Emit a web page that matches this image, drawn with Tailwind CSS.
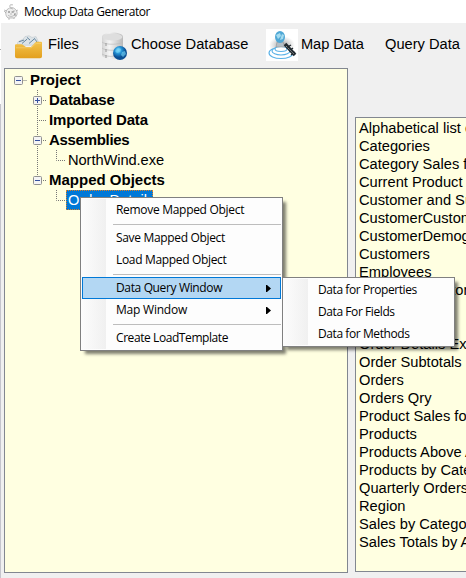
<!DOCTYPE html>
<html lang="en">
<head>
<meta charset="utf-8">
<title>Mockup Data Generator</title>
<script src="https://cdn.jsdelivr.net/npm/@tailwindcss/browser@4"></script>
</head>
<body class="w-[466px] h-[578px] overflow-hidden bg-white text-black font-['Liberation_Sans',sans-serif] text-[14.67px]">
<div class="relative w-[466px] h-[578px] overflow-hidden flex flex-col whitespace-nowrap">
  <header class="h-[23px] shrink-0 flex items-center pl-[3px] gap-[5px] bg-white">
    <svg class="w-4 h-[18px]" viewBox="0 0 16 18" fill="none" stroke="#999" stroke-width=".6">
      <path d="M7 4C6 2 8 1 10 2M5 6C2 7 2 13 5 15h6c4-2 4-7 1-9-2-2-5-2-7 0Z" fill="#eee"/>
      <path d="M4 8 1 7M1 8l2 2M13 8l2-1M6 8v2M9 8v2M11 7v2M5 12c2 2 5 2 7-1M7 11h2M6 15v2M11 15v1M7 5l3 1"/>
      <path d="M5 9h2M9 9h2M12 10v3" stroke="#555"/>
    </svg>
    <span class="font-['Open_Sans','Noto_Sans',sans-serif] text-[12px] leading-4 tracking-[-0.42px]">Mockup Data Generator</span>
  </header>
  <div class="flex-1 flex">
    <div class="w-px shrink-0 flex flex-col bg-white"><div class="h-[26px]"></div><div class="h-px bg-[#aaa]"></div><div class="h-[54px]"></div><div class="flex-1 bg-[#c5c5cc]"></div></div>
    <main class="flex-1 min-w-0 bg-[#f0f0f0] flex flex-col">
      <nav class="h-[42px] mb-[3px] shrink-0 flex items-center leading-[18px] text-[14.67px]">
        <svg class="ml-[13px] w-[29px] h-[25px] mt-[5px] shrink-0" viewBox="0 0 29 29" preserveAspectRatio="none">
          <defs><linearGradient id="fold" x2="0" y2="1"><stop stop-color="#f3c34c"/><stop offset="1" stop-color="#e3a01f"/></linearGradient></defs>
          <path d="m3 13 1-4 5-3 2-3 4-1 3 2 4-1 4 10Z" fill="#dce3e7" stroke="#b5bec5" stroke-width=".5"/>
          <path d="m5 9 5-2M8 11l5-5M13 4l3 3M15 11l6-6M21 6l3 5" stroke="#5c7f99" fill="none"/>
          <path d="M1 13q0-1 1-1h6l4 3h5l5-6h5q1 0 1 1v16q0 2-2 2H3q-2 0-2-2Z" fill="url(#fold)"/>
          <path d="M2 16h15l5-5h5" stroke="#f7d680" fill="none" stroke-width=".6"/>
        </svg>
        <span class="ml-[5px] w-[31px]">Files</span>
        <svg class="ml-[22px] w-[27px] h-[29px] mt-[4px] shrink-0" viewBox="0 0 27 29">
          <defs><linearGradient id="cyl"><stop stop-color="#d4d4d4"/><stop offset=".35" stop-color="#f5f5f5"/><stop offset="1" stop-color="#b9b9b9"/></linearGradient>
          <radialGradient id="glb" cx=".38" cy=".3"><stop stop-color="#8be1ff"/><stop offset=".5" stop-color="#2492d4"/><stop offset="1" stop-color="#0b4f94"/></radialGradient></defs>
          <path d="M1 5c0-6 21-6 21 0v18c0 5-21 5-21 0Z" fill="url(#cyl)"/>
          <ellipse cx="11.5" cy="5" rx="10" ry="3.5" fill="#dedede"/>
          <path d="M1 10c3 3 17 3 21 0M1 16c3 3 17 3 21 0M1 22c3 2 8 3 13 2" stroke="#bbb" fill="none" stroke-width=".7"/>
          <path d="M5 11v3M5 17v3M5 23v3" stroke="#999" stroke-width="1"/>
          <circle cx="19" cy="21" r="7" fill="url(#glb)"/>
          <path d="m14 19 3-3 3 1-1 3-3 1ZM21 20l3-1 1 3-3 3-2-2Z" fill="#72d3f6" opacity=".65"/>
        </svg>
        <span class="ml-[3px] w-[118px]">Choose Database</span>
        <svg class="ml-[17px] w-8 h-8 mt-[1px] bg-white shrink-0" viewBox="0 0 32 32">
          <defs><radialGradient id="shade"><stop stop-color="#666" stop-opacity=".7"/><stop offset="1" stop-color="#999" stop-opacity="0"/></radialGradient></defs>
          <ellipse cx="16" cy="16" rx="13" ry="9" fill="url(#shade)"/>
          <g fill="#fff" stroke="#58b1e7" stroke-width="1.1"><ellipse cx="15" cy="24" rx="12" ry="5.5"/><ellipse cx="15" cy="22" rx="9" ry="4"/><ellipse cx="15" cy="20" rx="6" ry="2.5"/></g>
          <path d="M11 13h6l2 5H10Z" fill="#b3bdc5" stroke="#888" stroke-width=".5"/>
          <ellipse cx="14" cy="8" rx="5" ry="6" fill="#4fa7d5"/><path d="m10 6 4-2 1 3-3 3ZM16 5l2 1-1 4-3 1Z" fill="#a5dcf0"/>
          <path d="m19 15 10 11" stroke="#222a30" stroke-width="3.5"/>
          <path d="m20 19 5-3M23 22l4-3M25 26l4-3" stroke="#222a30" stroke-width="1.4"/>
          <path d="m20 17 8 8" stroke="#aaa" stroke-width=".8" stroke-dasharray="2 1"/>
        </svg>
        <span class="ml-[3px] w-[63px] tracking-[-0.1px]">Map Data</span>
        <span class="ml-[21px]">Query Data</span>
      </nav>
      <div class="flex-1 flex pl-[3px] gap-[7px]">
        <section class="w-[344px] h-[505px] shrink-0 border border-[#828790] bg-[#ffffe1] pt-px leading-5">
          <svg class="absolute left-[5px] top-[69px] w-[90px] h-[140px]" viewBox="0 0 90 140" fill="none">
            <path d="M18.5 11.5h4M32.5 21v90M32 31.5h9M32 51.5h9M32 71.5h9M32 111.5h9M51.5 81v10.5H60M51.5 121v10.5H60" stroke="#777" stroke-dasharray="1 1"/>
            <g stroke="#919191" fill="#f4f4f4"><rect x="9.500" y="7.500" width="8" height="8" rx="1"/><rect x="28.500" y="27.500" width="8" height="8" rx="1"/><rect x="28.500" y="67.500" width="8" height="8" rx="1"/><rect x="28.500" y="107.500" width="8" height="8" rx="1"/></g>
            <path d="M11 11.500h5M30 31.500h5M32.500 29v5M30 71.500h5M30 111.500h5" stroke="#3450a0"/>
          </svg>
          <div class="pl-[25px] font-bold text-[15px]">Project</div>
          <div class="pl-[44px] font-bold text-[15px] tracking-[-0.12px]">Database</div>
          <div class="pl-[44px] font-bold text-[15px] tracking-[-0.15px]">Imported Data</div>
          <div class="pl-[44px] font-bold text-[15px] tracking-[-0.3px]">Assemblies</div>
          <div class="pl-[63px] tracking-[-0.07px]">NorthWind.exe</div>
          <div class="pl-[44px] font-bold text-[15px]">Mapped Objects</div>
          <div class="ml-[61px] w-[87px] h-5 bg-[#0078d7] text-white pl-px leading-[18px] border border-dotted border-[#e08020]">Order Detail</div>
        </section>
        <section class="mt-[49px] w-[220px] h-[455px] shrink-0 border border-[#828790] bg-[#ffffe1] pl-[3px] pt-px leading-[18px]">
          <div>Alphabetical list of products</div>
          <div>Categories</div>
          <div>Category Sales for 1997</div>
          <div>Current Product List</div>
          <div>Customer and Suppliers by City</div>
          <div>CustomerCustomerDemo</div>
          <div>CustomerDemographics</div>
          <div>Customers</div>
          <div>Employees</div>
          <div class="tracking-[-0.1px]">EmployeeTerritories</div>
          <div>Invoices</div>
          <div>Order Details</div>
          <div>Order Details Extended</div>
          <div>Order Subtotals</div>
          <div>Orders</div>
          <div>Orders Qry</div>
          <div>Product Sales for 1997</div>
          <div>Products</div>
          <div>Products Above Average Price</div>
          <div>Products by Category</div>
          <div>Quarterly Orders</div>
          <div>Region</div>
          <div>Sales by Category</div>
          <div>Sales Totals by Amount</div>
        </section>
      </div>
    </main>
  </div>

  <div class="absolute left-[80px] top-[197px] w-[203px] h-[154px] border border-[#808080] bg-[#fdfdfd] shadow-[4px_4px_3px_-1px_rgba(0,0,0,0.5)] p-px font-['Open_Sans','Noto_Sans',sans-serif] text-[12px]">
    <div class="absolute left-px top-px w-6 h-[150px] bg-linear-to-r from-[#fcfcfc] to-[#f0f0f0]"></div>
    <div class="relative flex flex-col leading-[22px] tracking-[-0.36px]">
      <div class="h-[22px] pl-[34px] tracking-[-0.3px]">Remove Mapped Object</div>
      <div class="h-[6px] pl-[31px] pt-[3px]"><div class="h-px bg-[#bdbdbd]"></div></div>
      <div class="h-[22px] pl-[34px] tracking-[-0.33px]">Save Mapped Object</div>
      <div class="h-[22px] pl-[34px] tracking-[-0.33px]">Load Mapped Object</div>
      <div class="h-[6px] pl-[31px] pt-[3px]"><div class="h-px bg-[#bdbdbd]"></div></div>
      <div class="h-[22px] pl-[33px] pr-[9px] leading-5 border border-[#0078d7] bg-[#b3d7f3] flex items-center justify-between"><span>Data Query Window</span><svg class="w-[5px] h-[7px]" viewBox="0 0 5 7"><path d="M0 0h1l4 3.500-4 3.500H0Z"/></svg></div>
      <div class="h-[22px] pl-[34px] pr-[10px] flex items-center justify-between"><span class="tracking-[-0.22px]">Map Window</span><svg class="w-[5px] h-[7px]" viewBox="0 0 5 7"><path d="M0 0h1l4 3.500-4 3.500H0Z"/></svg></div>
      <div class="h-[6px] pl-[31px] pt-[3px]"><div class="h-px bg-[#bdbdbd]"></div></div>
      <div class="h-[22px] pl-[34px] tracking-[-0.42px]">Create LoadTemplate</div>
    </div>
  </div>
  <div class="absolute left-[282px] top-[277px] w-[173px] h-[70px] border border-[#808080] bg-[#fdfdfd] shadow-[4px_4px_3px_-1px_rgba(0,0,0,0.5)] p-px font-['Open_Sans','Noto_Sans',sans-serif] text-[12px]">
    <div class="absolute left-px top-px w-6 h-[66px] bg-linear-to-r from-[#fcfcfc] to-[#f0f0f0]"></div>
    <div class="relative leading-[22px] pl-[34px] tracking-[-0.42px]">
      <div>Data for Properties</div>
      <div>Data For Fields</div>
      <div>Data for Methods</div>
    </div>
  </div>
</div>
</body>
</html>
